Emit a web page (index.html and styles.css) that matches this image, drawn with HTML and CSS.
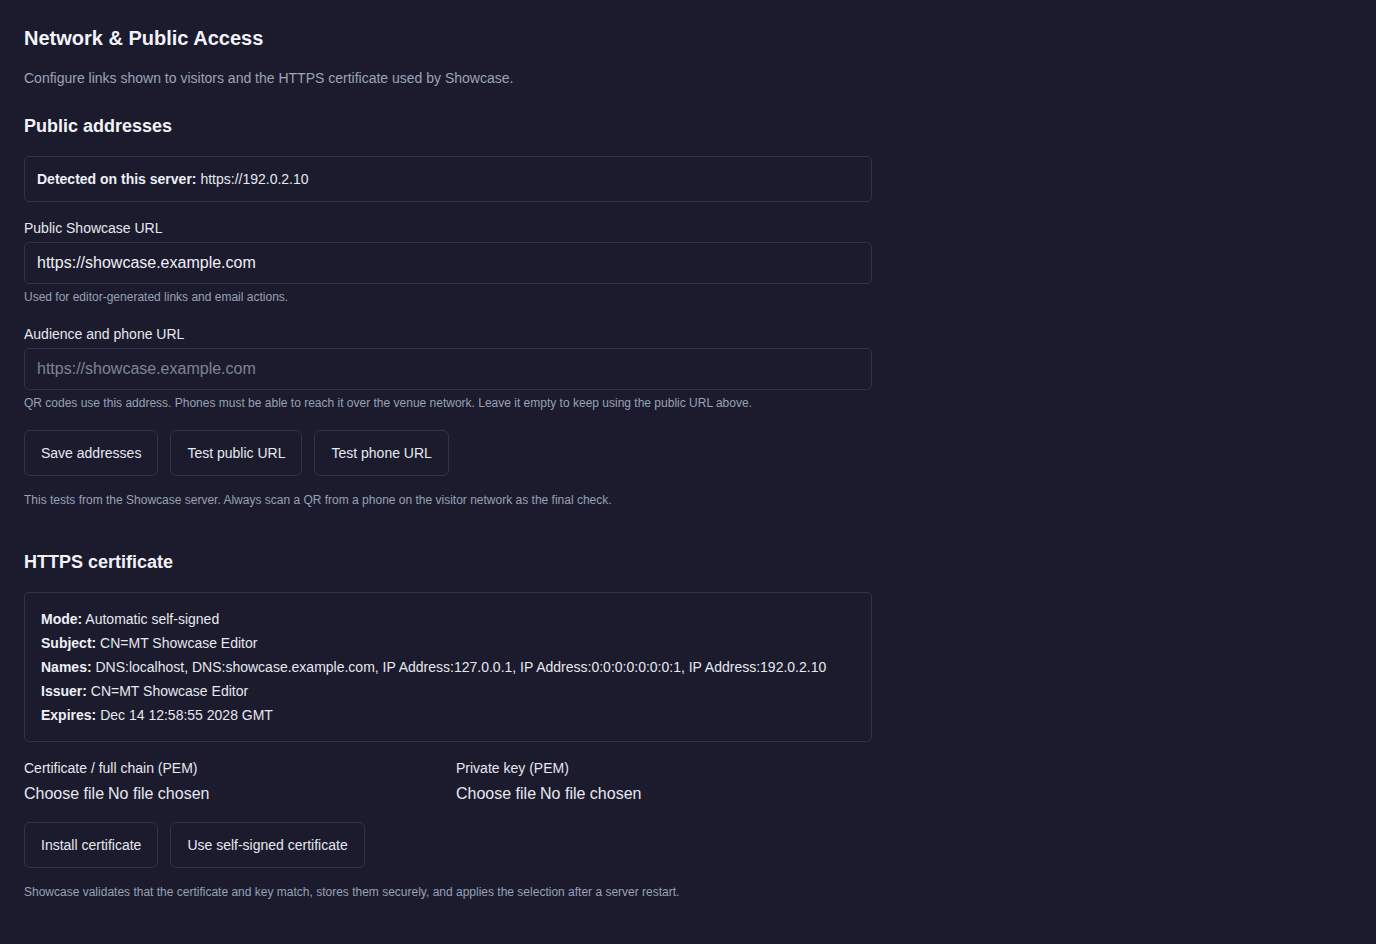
FILE: index.html
```html
<!DOCTYPE html>
<html lang="en">
<head>
<meta charset="utf-8">
<title>Network &amp; Public Access</title>
<link rel="stylesheet" href="styles.css">
</head>
<body>
<main class="page">
  <h1 class="title">Network &amp; Public Access</h1>
  <p class="subtitle">Configure links shown to visitors and the HTTPS certificate used by Showcase.</p>

  <section class="section">
    <h2 class="section-title">Public addresses</h2>
    <div class="info-box"><strong>Detected on this server:</strong> https://192.0.2.10</div>

    <label class="field-label" for="public-url">Public Showcase URL</label>
    <input class="text-input" id="public-url" type="text" value="https://showcase.example.com">
    <p class="hint">Used for editor-generated links and email actions.</p>

    <label class="field-label field-label-spaced" for="phone-url">Audience and phone URL</label>
    <input class="text-input" id="phone-url" type="text" placeholder="https://showcase.example.com">
    <p class="hint">QR codes use this address. Phones must be able to reach it over the venue network. Leave it empty to keep using the public URL above.</p>

    <div class="actions">
      <button class="btn" type="button">Save addresses</button>
      <button class="btn" type="button">Test public URL</button>
      <button class="btn" type="button">Test phone URL</button>
    </div>
    <p class="note">This tests from the Showcase server. Always scan a QR from a phone on the visitor network as the final check.</p>
  </section>

  <section class="section section-cert">
    <h2 class="section-title">HTTPS certificate</h2>
    <div class="cert-box">
      <div class="cert-line"><strong>Mode:</strong> Automatic self-signed</div>
      <div class="cert-line"><strong>Subject:</strong> CN=MT Showcase Editor</div>
      <div class="cert-line"><strong>Names:</strong> DNS:localhost, DNS:showcase.example.com, IP Address:127.0.0.1, IP Address:0:0:0:0:0:0:0:1, IP Address:192.0.2.10</div>
      <div class="cert-line"><strong>Issuer:</strong> CN=MT Showcase Editor</div>
      <div class="cert-line"><strong>Expires:</strong> Dec 14 12:58:55 2028 GMT</div>
    </div>

    <div class="file-grid">
      <div class="file-field">
        <span class="field-label">Certificate / full chain (PEM)</span>
        <div class="file-input">
          <label class="file-btn" for="cert-file">Choose file</label>
          <span class="file-name">No file chosen</span>
          <input class="file-hidden" id="cert-file" type="file">
        </div>
      </div>
      <div class="file-field">
        <span class="field-label">Private key (PEM)</span>
        <div class="file-input">
          <label class="file-btn" for="key-file">Choose file</label>
          <span class="file-name">No file chosen</span>
          <input class="file-hidden" id="key-file" type="file">
        </div>
      </div>
    </div>

    <div class="actions actions-cert">
      <button class="btn" type="button">Install certificate</button>
      <button class="btn" type="button">Use self-signed certificate</button>
    </div>
    <p class="note">Showcase validates that the certificate and key match, stores them securely, and applies the selection after a server restart.</p>
  </section>
</main>
</body>
</html>
```

FILE: styles.css
```css
* {
  box-sizing: border-box;
}

html, body {
  margin: 0;
  padding: 0;
  background: #1b1b2d;
  color: #e6e8ef;
  font-family: "Liberation Sans", Arial, Helvetica, sans-serif;
}

.page {
  padding: 24px 24px 40px;
  width: 896px;
}

.title {
  margin: 0;
  font-size: 20px;
  line-height: 28px;
  font-weight: 700;
  color: #f1f3f8;
}

.subtitle {
  margin: 16px 0 0;
  font-size: 14px;
  line-height: 20px;
  color: #9ba4b8;
}

.section {
  display: flex;
  flex-direction: column;
  margin-top: 26px;
}

.section-cert {
  margin-top: 42px;
}

.section-title {
  margin: 0 0 18px;
  font-size: 18px;
  line-height: 24px;
  font-weight: 700;
  color: #f1f3f8;
}

.info-box {
  border: 1px solid #2f3447;
  border-radius: 5px;
  padding: 12px;
  font-size: 14px;
  line-height: 20px;
  color: #e6e8ef;
}

.info-box strong,
.cert-line strong {
  font-weight: 700;
  color: #eef0f6;
}

.field-label {
  display: block;
  margin-top: 16px;
  font-size: 14px;
  line-height: 20px;
  color: #e6e8ef;
}

.field-label-spaced {
  margin-top: 19px;
}

.text-input {
  display: block;
  width: 100%;
  margin-top: 4px;
  height: 42px;
  padding: 10px 12px;
  border: 1px solid #2f3447;
  border-radius: 5px;
  background: #1b1b2d;
  color: #eef0f6;
  font-family: inherit;
  font-size: 16px;
  line-height: 20px;
  outline: none;
}

.text-input::placeholder {
  color: #7d8498;
}

.hint {
  margin: 5px 0 0;
  font-size: 12px;
  line-height: 16px;
  color: #98a1b5;
}

.actions {
  display: flex;
  gap: 12px;
  margin-top: 19px;
}

.actions-cert {
  margin-top: 18px;
}

.btn {
  height: 46px;
  padding: 0 16px;
  border: 1px solid #2f3447;
  border-radius: 6px;
  background: #1b1b2d;
  color: #e6e8ef;
  font-family: inherit;
  font-size: 14px;
  line-height: 20px;
  cursor: pointer;
}

.note {
  margin: 16px 0 0;
  font-size: 12px;
  line-height: 16px;
  color: #98a1b5;
}

.cert-box {
  border: 1px solid #2f3447;
  border-radius: 5px;
  padding: 14px 16px;
}

.cert-line {
  font-size: 14px;
  line-height: 24px;
  color: #e6e8ef;
}

.file-grid {
  display: grid;
  grid-template-columns: 1fr 1fr;
  gap: 16px;
}

.file-field {
  display: flex;
  flex-direction: column;
}

.file-field .field-label {
  margin-top: 16px;
}

.file-input {
  display: flex;
  gap: 4px;
  margin-top: 6px;
  font-size: 16px;
  line-height: 20px;
  color: #e6e8ef;
}

.file-btn {
  cursor: pointer;
}

.file-hidden {
  display: none;
}
```
